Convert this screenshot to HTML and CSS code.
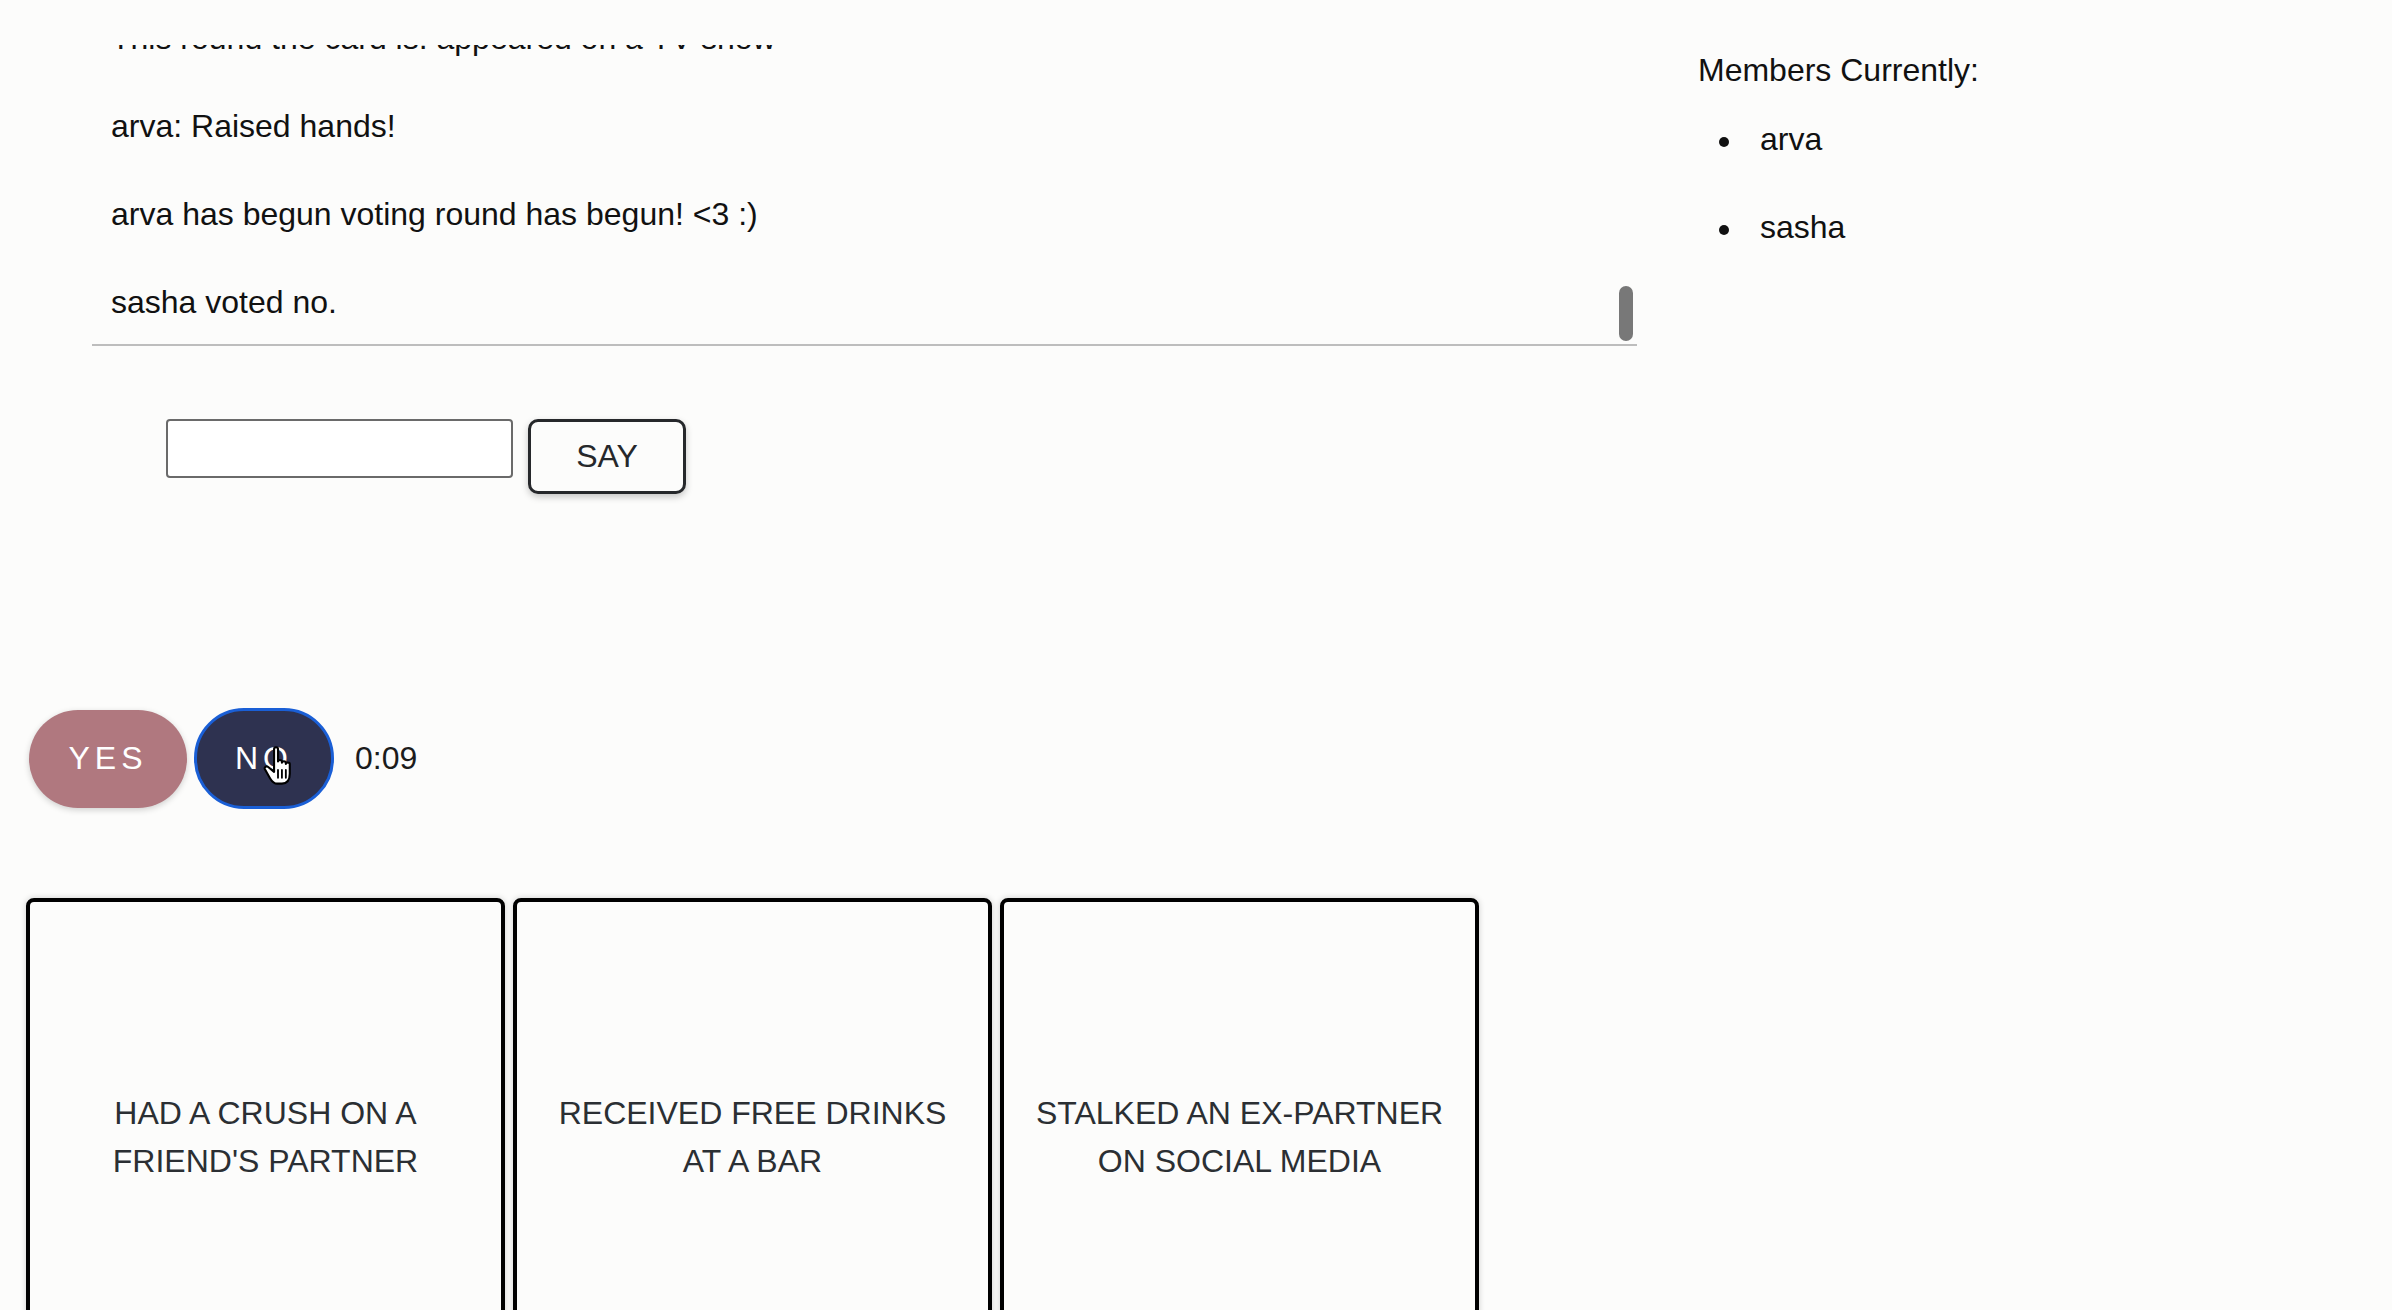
FILE: index.html
```html
<!DOCTYPE html>
<html lang="en">
<head>
<meta charset="utf-8">
<title>Game room</title>
<link rel="stylesheet" href="styles.css">
</head>
<body>
<div class="page">
  <main class="main">
    <div class="chat">
      <div class="chat-log">
        <p class="msg">This round the card is: appeared on a TV show</p>
        <p class="msg">arva: Raised hands!</p>
        <p class="msg">arva has begun voting round has begun! &lt;3 :)</p>
        <p class="msg">sasha voted no.</p>
      </div>
      <div class="scroll-thumb" aria-hidden="true"></div>
    </div>

    <div class="composer">
      <input class="say-input" type="text" aria-label="Message">
      <button class="say-btn" type="button">SAY</button>
    </div>

    <div class="vote">
      <button class="vote-btn yes" type="button">YES</button>
      <button class="vote-btn no" type="button">NO<svg class="cursor" viewBox="0 0 26 32" width="34" height="42" aria-hidden="true"><path d="M10 3 C10 1.2 13 1.2 13 3 V12.5 C13 11 16 11 16 12.5 V13.5 C16 12 19 12 19 13.5 V14.5 C19 13 22 13 22 14.5 V22 C22 26.5 20 29.5 16 29.5 H12.5 C10 29.5 8.5 28 7 25.5 L3 18.5 C2.3 17 4 15.6 5.5 16.8 L10 20.5 Z" fill="#fff" stroke="#000" stroke-width="1.6" stroke-linejoin="round"/><path d="M13 19 V25 M16 19 V25 M19 19 V25" stroke="#000" stroke-width="1.4" stroke-linecap="round"/></svg></button>
      <span class="timer">0:09</span>
    </div>

    <div class="cards">
      <div class="card"><span class="card-text">Had a crush on a friend's partner</span></div>
      <div class="card"><span class="card-text">Received free drinks at a bar</span></div>
      <div class="card"><span class="card-text">Stalked an ex-partner on social media</span></div>
    </div>
  </main>

  <aside class="members">
    <h2 class="members-title">Members Currently:</h2>
    <ul class="members-list">
      <li class="member">arva</li>
      <li class="member">sasha</li>
    </ul>
  </aside>
</div>
</body>
</html>
```

FILE: styles.css
```css
html {
  overflow: hidden;
}

body {
  margin: 0;
  background: #fcfcfb;
  color: #111;
  font-family: "Liberation Sans", Arial, Helvetica, sans-serif;
  font-size: 32px;
}

.page {
  display: flex;
  align-items: flex-start;
}

.main {
  flex: none;
  width: 1698px;
}

/* chat log */
.chat {
  position: relative;
  margin: 45px 0 0 92px;
  width: 1545px;
  height: 299px;
  border-bottom: 2px solid #bdbdbd;
  overflow: hidden;
  display: flex;
  flex-direction: column;
  justify-content: flex-end;
}

.chat-log {
  flex: none;
  padding-left: 19px;
  margin-bottom: -2px;
}

.scroll-thumb {
  position: absolute;
  right: 4px;
  bottom: 3px;
  width: 14px;
  height: 55px;
  border-radius: 7px;
  background: #787878;
}

.msg {
  margin: 0;
  line-height: 88px;
  white-space: nowrap;
}

/* composer */
.composer {
  display: flex;
  align-items: flex-start;
  gap: 15px;
  margin: 73px 0 0 166px;
}

.say-input {
  box-sizing: border-box;
  width: 347px;
  height: 59px;
  border: 2px solid #6a6a6a;
  border-radius: 4px;
  background: #fff;
  font: inherit;
}

.say-btn {
  box-sizing: border-box;
  width: 158px;
  height: 75px;
  border: 3px solid #26282b;
  border-radius: 10px;
  background: #fcfcfb;
  color: #26282b;
  font-family: inherit;
  font-size: 32px;
  box-shadow: 0 3px 7px rgba(0, 0, 0, 0.22);
  padding: 0;
}

/* voting */
.vote {
  display: flex;
  align-items: center;
  margin: 214px 0 0 29px;
}

.vote-btn {
  box-sizing: border-box;
  border-radius: 50px;
  color: #fff;
  font-family: inherit;
  font-size: 32px;
  letter-spacing: 5px;
  padding: 0;
}

.yes {
  width: 158px;
  height: 98px;
  border: none;
  background: #b0787f;
  box-shadow: 0 2px 6px rgba(0, 0, 0, 0.18);
}

.no {
  position: relative;
  width: 140px;
  height: 101px;
  margin-left: 7px;
  border: 3px solid #1a5fd6;
  background: #2e3250;
}

.cursor {
  position: absolute;
  left: 64px;
  top: 34px;
}

.timer {
  margin-left: 21px;
  color: #1c1c1c;
}

/* cards */
.cards {
  display: flex;
  gap: 8px;
  margin: 89px 0 0 26px;
}

.card {
  box-sizing: border-box;
  flex: none;
  width: 479px;
  height: 478px;
  border: 4px solid #000;
  border-radius: 8px;
  box-shadow: 0 0 6px rgba(0, 0, 0, 0.18);
  display: flex;
  align-items: center;
  justify-content: center;
  padding: 0 24px;
  text-align: center;
}

.card-text {
  text-transform: uppercase;
  line-height: 48px;
  color: #2b2f33;
}

/* members */
.members {
  flex: 1;
  padding-top: 52px;
}

.members-title {
  margin: 0;
  font-size: 32px;
  font-weight: normal;
  line-height: 37px;
}

.members-list {
  list-style: none;
  margin: 6px 0 0;
  padding: 0 0 0 21px;
}

.member {
  line-height: 88px;
}

.member::before {
  content: "";
  display: inline-block;
  width: 10px;
  height: 10px;
  border-radius: 50%;
  background: #111;
  margin-right: 31px;
  vertical-align: middle;
}
```
